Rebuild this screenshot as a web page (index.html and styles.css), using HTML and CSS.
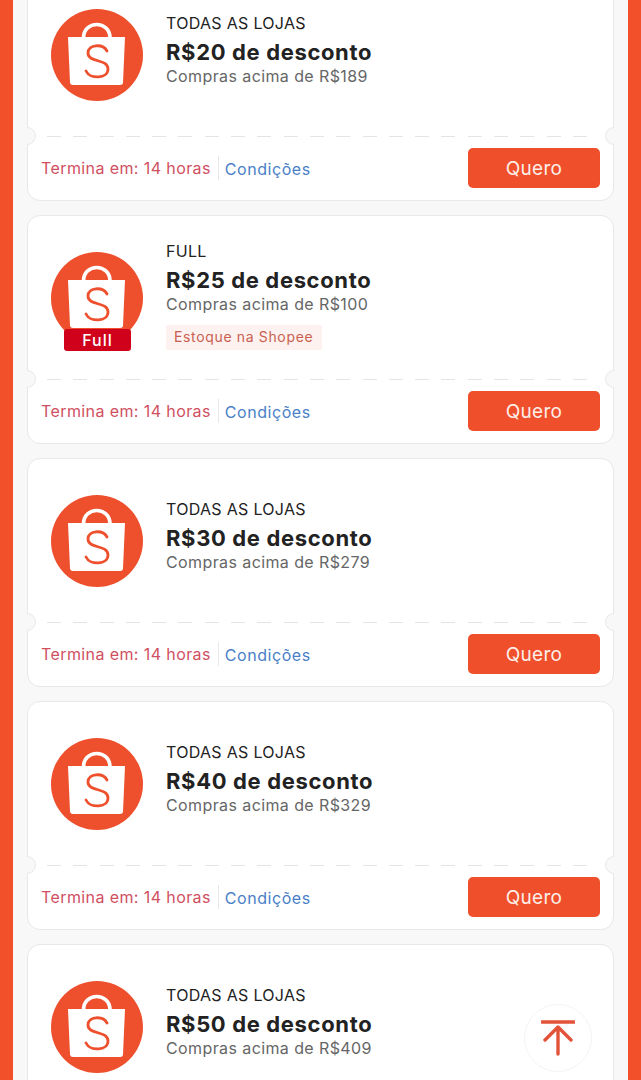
FILE: index.html
```html
<!DOCTYPE html>
<html lang="pt-BR">

<head>
  <meta charset="UTF-8">
  <meta name="viewport" content="width=device-width, initial-scale=1.0">
  <title>Cupons</title>
  <link rel="stylesheet" href="styles.css">
</head>

<body>
  <svg class="defs" width="0" height="0">
    <symbol id="bag" viewBox="0 0 92 92">
      <circle cx="46" cy="46" r="46" fill="#ee4f2d" />
      <path d="M32.500 29 C32.500 11 59 11 59 29" fill="none" stroke="#fff" stroke-width="3.600" />
      <path d="M17 28 H74 L72 73.500 Q71.800 76 69 76 H22 Q19.300 76 19 73.500 Z" fill="#fff" />
      <path d="M56 42 C52 34.500 37 35 37 44 C37 54 57 49.500 57 60 C57 70 39 70.500 35 62" fill="none" stroke="#ee4f2d" stroke-width="2.800" stroke-linecap="round" />
    </symbol>
  </svg>

  <div class="page">
    <div class="list">

      <div class="card">
        <div class="card-top">
          <div class="logo"><svg width="92" height="92"><use href="#bag" /></svg></div>
          <div class="info">
            <div class="store">TODAS AS LOJAS</div>
            <div class="title">R$20 de desconto</div>
            <div class="min">Compras acima de R$189</div>
          </div>
        </div>
        <div class="card-bottom">
          <span class="ends">Termina em: 14 horas</span>
          <a class="terms">Condições</a>
          <button type="button" class="want">Quero</button>
        </div>
      </div>

      <div class="card">
        <div class="card-top">
          <div class="logo">
            <svg width="92" height="92"><use href="#bag" /></svg>
            <span class="full-tag">Full</span>
          </div>
          <div class="info info-tall">
            <div class="store">FULL</div>
            <div class="title">R$25 de desconto</div>
            <div class="min">Compras acima de R$100</div>
            <span class="stock">Estoque na Shopee</span>
          </div>
        </div>
        <div class="card-bottom">
          <span class="ends">Termina em: 14 horas</span>
          <a class="terms">Condições</a>
          <button type="button" class="want">Quero</button>
        </div>
      </div>

      <div class="card">
        <div class="card-top">
          <div class="logo"><svg width="92" height="92"><use href="#bag" /></svg></div>
          <div class="info">
            <div class="store">TODAS AS LOJAS</div>
            <div class="title">R$30 de desconto</div>
            <div class="min">Compras acima de R$279</div>
          </div>
        </div>
        <div class="card-bottom">
          <span class="ends">Termina em: 14 horas</span>
          <a class="terms">Condições</a>
          <button type="button" class="want">Quero</button>
        </div>
      </div>

      <div class="card">
        <div class="card-top">
          <div class="logo"><svg width="92" height="92"><use href="#bag" /></svg></div>
          <div class="info">
            <div class="store">TODAS AS LOJAS</div>
            <div class="title">R$40 de desconto</div>
            <div class="min">Compras acima de R$329</div>
          </div>
        </div>
        <div class="card-bottom">
          <span class="ends">Termina em: 14 horas</span>
          <a class="terms">Condições</a>
          <button type="button" class="want">Quero</button>
        </div>
      </div>

      <div class="card">
        <div class="card-top">
          <div class="logo"><svg width="92" height="92"><use href="#bag" /></svg></div>
          <div class="info">
            <div class="store">TODAS AS LOJAS</div>
            <div class="title">R$50 de desconto</div>
            <div class="min">Compras acima de R$409</div>
          </div>
        </div>
      </div>

    </div>

    <button type="button" class="to-top" aria-label="Voltar ao topo">
      <svg width="34" height="36" viewBox="0 0 34 36">
        <path d="M1 2 H33 M17 34 V7 M4 20 L17 7 L30 20" fill="none" stroke="#e2533a" stroke-width="3.400" stroke-linecap="round" stroke-linejoin="round" />
      </svg>
    </button>
  </div>
</body>

</html>
```

FILE: styles.css
```css
html,
body {
  margin: 0;
  height: 100%;
  overflow: hidden;
}

.defs {
  display: block;
  height: 0;
}

.page {
  position: relative;
  height: 1080px;
  overflow: hidden;
  box-sizing: border-box;
  background-color: #f8f8f8;
  border-left: 13px solid #f24f2b;
  border-right: 13px solid #f24f2b;
  padding: 0 14px;
  font-family: Inter, "Liberation Sans", sans-serif;
}

.list {
  display: flex;
  flex-direction: column;
  gap: 14px;
  margin-top: -28px;
}

.card {
  position: relative;
  flex: none;
  height: 229px;
  box-sizing: border-box;
  background-color: #fff;
  border: 1px solid #e8e8e8;
  border-radius: 13px;
}

/* side notches on the dashed line */
.card::before,
.card::after {
  content: "";
  position: absolute;
  top: 154px;
  width: 18px;
  height: 18px;
  box-sizing: border-box;
  border-radius: 50%;
  background-color: #f8f8f8;
  border: 1px solid #e8e8e8;
}

.card::before {
  left: -10px;
  clip-path: inset(0 0 0 9px);
}

.card::after {
  right: -10px;
  clip-path: inset(0 9px 0 0);
}

.card-top {
  display: flex;
  height: 164px;
  box-sizing: border-box;
  padding: 36px 0 0 23px;
  background-image: repeating-linear-gradient(90deg, #e4e4e4 0 14px, transparent 14px 26.300px);
  background-repeat: no-repeat;
  background-position: 19px 100%;
  background-size: calc(100% - 44px) 1px;
}

.logo {
  position: relative;
  width: 92px;
  height: 92px;
  margin-right: 23px;
}

.logo svg {
  display: block;
}

.full-tag {
  position: absolute;
  left: 13px;
  bottom: -7px;
  width: 67px;
  height: 22px;
  border-radius: 3px;
  background-color: #d0011b;
  color: #fff;
  font-size: 16px;
  font-weight: 500;
  letter-spacing: 1px;
  line-height: 22px;
  text-align: center;
}

.info {
  margin-top: 4px;
}

.info-tall {
  margin-top: -11px;
}

.store {
  color: #222;
  font-size: 16px;
  letter-spacing: 0.3px;
  line-height: 20px;
}

.title {
  margin-top: 5px;
  color: #222;
  font-size: 22px;
  font-weight: 700;
  letter-spacing: 0.65px;
  line-height: 28px;
}

.min {
  color: #666;
  font-size: 16px;
  letter-spacing: 0.4px;
  line-height: 20px;
}

.stock {
  display: inline-block;
  margin-top: 11px;
  padding: 0 9px 1px 8px;
  background-color: #fdf2ef;
  color: #c9604f;
  font-size: 14px;
  letter-spacing: 0.65px;
  line-height: 24px;
}

.card-bottom {
  display: flex;
  align-items: center;
  height: 62px;
  padding: 0 13px;
}

.ends {
  padding-right: 7px;
  border-right: 1px solid #e8e8e8;
  color: #d0505f;
  font-size: 16px;
  letter-spacing: 0.4px;
  line-height: 24px;
}

.terms {
  margin-left: 6px;
  margin-top: 1px;
  color: #4a7fc8;
  font-size: 16px;
  letter-spacing: 0.55px;
}

.want {
  width: 132px;
  height: 40px;
  margin-left: auto;
  border: 0;
  border-radius: 5px;
  background-color: #ef4f2b;
  color: #fdeee8;
  font-family: inherit;
  font-size: 19px;
  letter-spacing: 0.3px;
}

.to-top {
  position: absolute;
  left: 511px;
  top: 1004px;
  display: flex;
  align-items: center;
  justify-content: center;
  width: 68px;
  height: 68px;
  padding: 0;
  border: 1px solid #f4f4f4;
  border-radius: 50%;
  background-color: #fff;
}
```
